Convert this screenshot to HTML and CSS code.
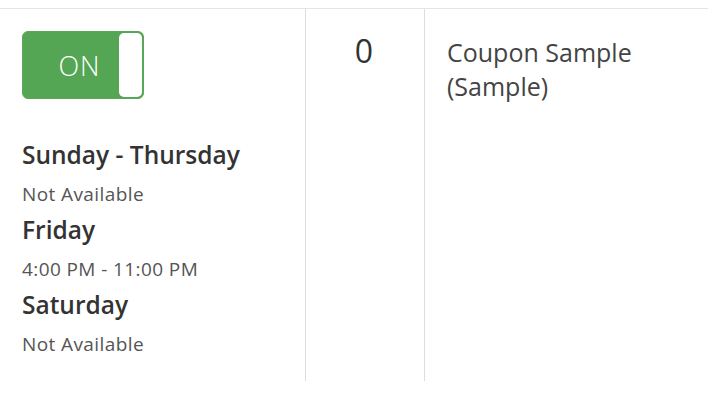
FILE: index.html
```html
<!DOCTYPE html>
<html>
<head>
<meta charset="utf-8">
<link rel="stylesheet" href="styles.css">
</head>
<body>
<div class="table">
  <div class="row">
    <div class="cell cell-schedule">
      <div class="toggle">
        <span class="toggle-label">ON</span>
        <span class="toggle-knob"></span>
      </div>
      <div class="schedule">
        <div class="day">Sunday - Thursday</div>
        <div class="hours">Not Available</div>
        <div class="day">Friday</div>
        <div class="hours">4:00 PM - 11:00 PM</div>
        <div class="day">Saturday</div>
        <div class="hours">Not Available</div>
      </div>
    </div>
    <div class="cell cell-count">0</div>
    <div class="cell cell-name">Coupon Sample<br>(Sample)</div>
  </div>
</div>
</body>
</html>
```
FILE: styles.css
```css
html, body {
  margin: 0;
  padding: 0;
  background: #ffffff;
}
body {
  font-family: "Open Sans", "Noto Sans", sans-serif;
  color: #333333;
  padding-top: 8px;
}
.table {
  width: 708px;
  border-top: 1px solid #e2e5ea;
}
.row {
  display: flex;
  height: 372px;
}
.cell {
  box-sizing: border-box;
}
.cell-schedule {
  width: 306px;
  padding: 22px 0 0 22px;
  border-right: 1px solid #dcdde6;
}
.cell-count {
  width: 119px;
  border-right: 1px solid #dcdde6;
  text-align: center;
  font-size: 32px;
  line-height: 40px;
  padding-top: 22px;
  padding-right: 2px;
  color: #333;
}
.cell-name {
  flex: 1;
  padding: 26px 0 0 22px;
  font-size: 25px;
  line-height: 34px;
  color: #444;
}
.toggle {
  width: 122px;
  height: 68px;
  box-sizing: border-box;
  background: #55a654;
  border: 1px solid #5aa859;
  border-radius: 6px;
  display: flex;
  align-items: center;
  padding: 1px;
}
.toggle-label {
  flex: 1;
  text-align: center;
  color: #ffffff;
  font-size: 27px;
  font-weight: 300;
  letter-spacing: 1px;
  padding-left: 16px;
}
.toggle-knob {
  width: 23px;
  height: 64px;
  background: #ffffff;
  border-radius: 5px;
}
.schedule {
  margin-top: 38px;
}
.day {
  font-size: 24.5px;
  font-weight: 600;
  line-height: 36px;
  color: #333333;
}
.hours {
  font-size: 19px;
  letter-spacing: 0.4px;
  line-height: 36px;
  padding-top: 3px;
  color: #555555;
}
```
